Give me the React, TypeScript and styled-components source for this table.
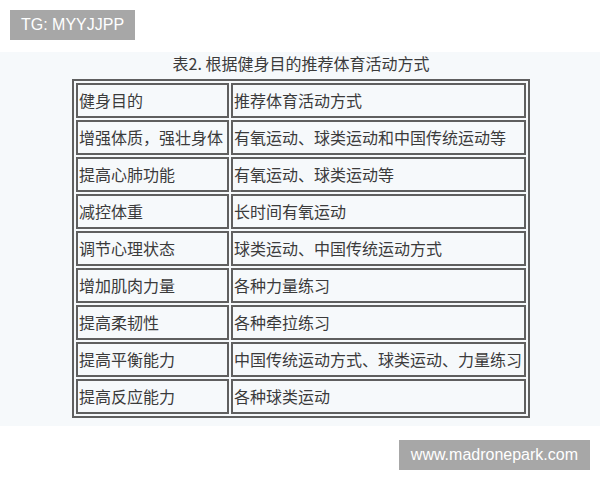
import styled, { createGlobalStyle } from "styled-components";

const GlobalStyle = createGlobalStyle`
  html, body {
    margin: 0;
    padding: 0;
    background: #ffffff;
  }
  body {
    width: 600px;
    height: 480px;
    overflow: hidden;
    font-family: "Liberation Sans", Arial, sans-serif;
  }
`;

const Page = styled.div`
  display: flex;
  flex-direction: column;
  width: 600px;
`;

const Badge = styled.div<{ $align: "start" | "end" }>`
  align-self: ${(p) => (p.$align === "end" ? "flex-end" : "flex-start")};
  height: 30px;
  line-height: 30px;
  padding: 0 ${(p) => (p.$align === "end" ? "12px" : "11px")};
  margin: ${(p) => (p.$align === "end" ? "14px 10px 0 0" : "10px 0 0 10px")};
  background-color: #a7a7a7;
  color: #ffffff;
  font-family: "Liberation Sans", Arial, sans-serif;
  font-size: 16px;
  white-space: nowrap;
`;

const Picture = styled.div`
  display: flex;
  flex-direction: column;
  align-items: center;
  margin-top: 12px;
  height: 374px;
  background-color: #f6f9fb;
  font-family: "Noto Sans CJK SC", "Noto Sans", sans-serif;
  color: #3b3b3b;
`;

const Caption = styled.div`
  height: 22px;
  line-height: 22px;
  margin: 0 0 5px 2px;
  font-size: 16px;
  white-space: nowrap;
`;

const Table = styled.table`
  width: 458px;
  margin-left: 2px;
  border: 2px solid #5f5f5f;
  border-collapse: separate;
  border-spacing: 2px;
  table-layout: fixed;
`;

const Cell = styled.td<{ $first?: boolean }>`
  width: ${(p) => (p.$first ? "148px" : "auto")};
  height: 31px;
  padding: 0 0 0 ${(p) => (p.$first ? "1px" : "1px")};
  border: 2px solid #5f5f5f;
  font-size: 16px;
  line-height: 31px;
  white-space: nowrap;
  overflow: hidden;
  vertical-align: middle;
  color: #3b3b3b;
`;

const rows: [string, string][] = [
  ["健身目的", "推荐体育活动方式"],
  ["增强体质，强壮身体", "有氧运动、球类运动和中国传统运动等"],
  ["提高心肺功能", "有氧运动、球类运动等"],
  ["减控体重", "长时间有氧运动"],
  ["调节心理状态", "球类运动、中国传统运动方式"],
  ["增加肌肉力量", "各种力量练习"],
  ["提高柔韧性", "各种牵拉练习"],
  ["提高平衡能力", "中国传统运动方式、球类运动、力量练习"],
  ["提高反应能力", "各种球类运动"],
];

const App = (): JSX.Element => {
  return (
    <Page>
      <GlobalStyle />
      <Badge $align="start">TG: MYYJJPP</Badge>
      <Picture>
        <Caption>表2. 根据健身目的推荐体育活动方式</Caption>
        <Table>
          <tbody>
            {rows.map(([goal, sport]) => (
              <tr key={goal}>
                <Cell $first>{goal}</Cell>
                <Cell>{sport}</Cell>
              </tr>
            ))}
          </tbody>
        </Table>
      </Picture>
      <Badge $align="end">www.madronepark.com</Badge>
    </Page>
  );
};

export default App;
